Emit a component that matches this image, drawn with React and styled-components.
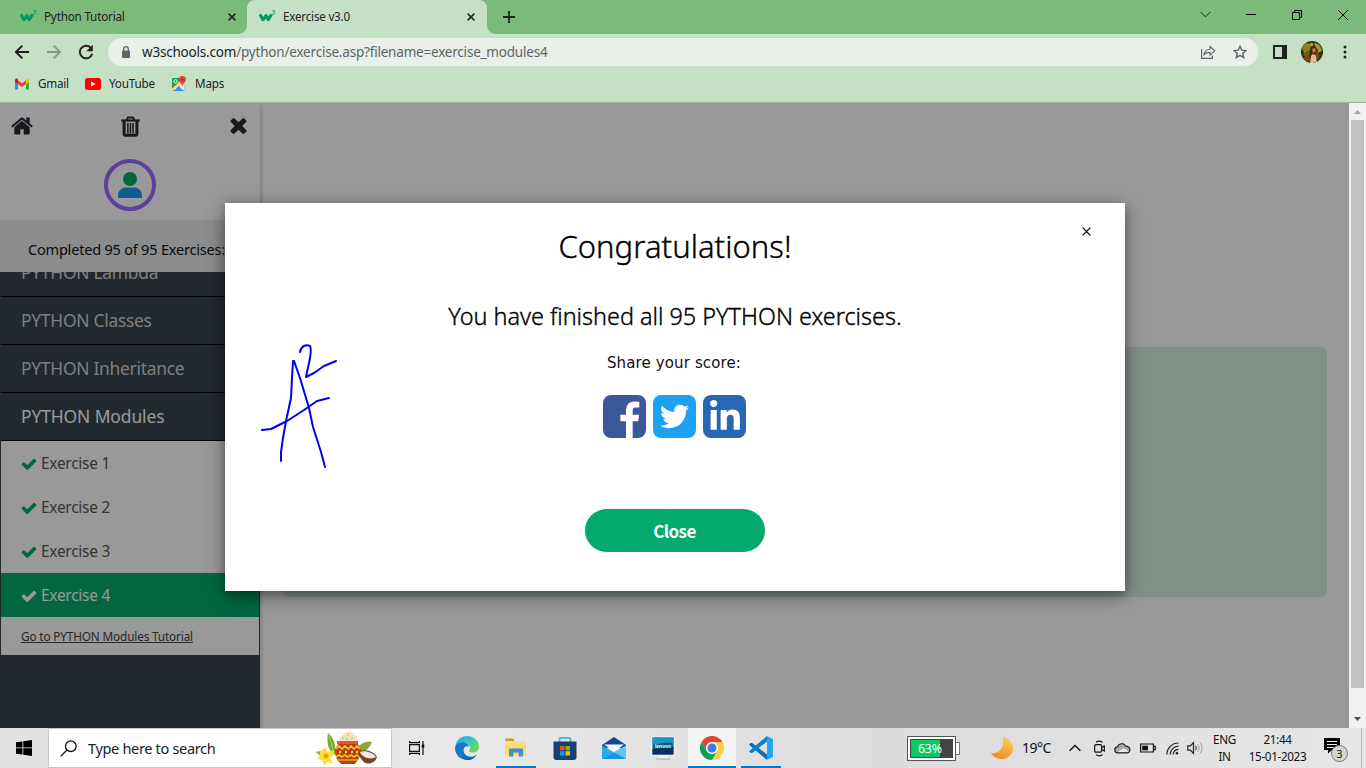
import React from "react";
import styled, { createGlobalStyle, css } from "styled-components";
import { FaTwitter, FaLinkedinIn } from "react-icons/fa";

const Global = createGlobalStyle`
  * { box-sizing: border-box; }
  html, body { margin: 0; padding: 0; overflow: hidden; }
  body { font-family: "Noto Sans", "Open Sans", sans-serif; }
  svg { display: block; flex: none; }
`;

const Screen = styled.div`
  position: relative;
  display: flex;
  flex-direction: column;
  width: 1366px;
  height: 768px;
  overflow: hidden;
`;

const Label = styled.span`
  display: block;
  white-space: nowrap;
  font-size: ${(p) => p.$size}px;
  font-weight: ${(p) => p.$weight || 400};
  letter-spacing: ${(p) => p.$track || 0}px;
  color: ${(p) => p.$color || "#202124"};
  line-height: ${(p) => p.$line || 20}px;
`;

/* ---------- browser frame ---------- */

const TabStrip = styled.div`
  display: flex;
  height: 34px;
  background: #7aba7b;
`;

const Tab = styled.div`
  display: flex;
  align-items: center;
  width: ${(p) => p.$width}px;
  height: 34px;
  padding: 0 ${(p) => p.$end}px 0 ${(p) => p.$pad}px;
  ${(p) =>
    p.$active &&
    css`
      background: #c5e1c5;
      border-radius: 8px 8px 0 0;
    `}
`;

const TabFlare = styled.div`
  width: 8px;
  height: 8px;
  align-self: flex-end;
  background: radial-gradient(
    circle at ${(p) => (p.$left ? "0 0" : "100% 0")},
    transparent 7.5px,
    #c5e1c5 8px
  );
`;

const TabTitle = styled(Label)`
  flex: 1;
  margin-left: 7px;
  padding-bottom: 2px;
`;

const NewTab = styled.div`
  display: flex;
  align-items: center;
  margin-left: 8px;
`;

const WindowButtons = styled.div`
  display: flex;
  margin-left: auto;
  height: 29px;
`;

const WindowButton = styled.div`
  display: flex;
  align-items: center;
  justify-content: center;
  width: 46px;
`;

const Toolbar = styled.div`
  display: flex;
  align-items: center;
  height: 36px;
  padding: 0 14px;
  background: #c5e1c5;
`;

const NavIcons = styled.div`
  display: flex;
  gap: 16px;
  width: 94px;
`;

const AddressBar = styled.div`
  display: flex;
  align-items: center;
  width: 1150px;
  height: 28px;
  padding: 0 11px 0 13px;
  border-radius: 14px;
  background: #e8f0e9;
`;

const Url = styled(Label)`
  flex: 1;
  margin-left: 11px;
  & > span { color: #5f6368; }
`;

const AddressActions = styled.div`
  display: flex;
  gap: 17px;
`;

const ToolbarActions = styled.div`
  display: flex;
  align-items: center;
  margin-left: 15px;
`;

const Avatar = styled.div`
  width: 22px;
  height: 22px;
  margin: 0 20px 0 14px;
  border-radius: 50%;
  overflow: hidden;
`;

const Bookmarks = styled.div`
  display: flex;
  height: 33px;
  padding: 4px 14px 0;
  background: #c5e1c5;
  border-bottom: 1px solid #9fb8a0;
`;

const Bookmark = styled.div`
  display: flex;
  align-items: center;
  height: 20px;
  gap: 8px;
  width: ${(p) => p.$width}px;
  & > span { padding-bottom: 2px; }
`;

/* ---------- page ---------- */

const Viewport = styled.div`
  display: flex;
  height: 625px;
`;

const Page = styled.div`
  position: relative;
  display: flex;
  width: 1349px;
  height: 625px;
  overflow: hidden;
  background: #fff;
`;

const Sidebar = styled.aside`
  display: flex;
  flex-direction: column;
  width: 260px;
  background: #38444d;
  box-shadow: 0 2px 5px rgba(0, 0, 0, 0.3);
`;

const SideTools = styled.div`
  display: flex;
  align-items: center;
  height: 47px;
  padding: 0 13px 1px 11px;
  background: #fff;
`;

const SideTool = styled.div`
  display: flex;
  flex: ${(p) => p.$flex};
`;

const Profile = styled.div`
  display: flex;
  justify-content: center;
  height: 70px;
  padding-top: 9px;
  background: #fff;
`;

const ProfileRing = styled.div`
  display: flex;
  align-items: center;
  justify-content: center;
  width: 52px;
  height: 52px;
  border: 4px solid #9d69ff;
  border-radius: 50%;
`;

const Progress = styled.div`
  height: 52px;
  padding: 19px 0 0 28px;
  background: #e7e9eb;
  overflow: hidden;
`;

const ChapterList = styled.div`
  height: 456px;
  padding: 0 1px;
  overflow: hidden;
`;

const Chapter = styled.div`
  display: flex;
  align-items: center;
  height: 48px;
  padding: 0 0 1px 20px;
  border-bottom: 1px solid #000;
  &:first-child { margin-top: -23px; }
`;

const Exercise = styled.div`
  display: flex;
  align-items: center;
  gap: 4px;
  height: 44px;
  padding: 1px 0 0 20px;
  background: ${(p) => (p.$active ? "#04aa6d" : "#fff")};
`;

const TutorialLink = styled.div`
  height: 38px;
  padding: 9px 0 0 20px;
  background: #fff;
  & > span { text-decoration: underline; }
`;

const Content = styled.main`
  width: 1089px;
  padding: 244px 22px 0 23px;
`;

const QuestionPanel = styled.div`
  height: 250px;
  border-radius: 5px;
  background: #d9eee1;
`;

const Backdrop = styled.div`
  position: absolute;
  inset: 0;
  padding: 100px 0 0 225px;
  background: rgba(0, 0, 0, 0.4);
`;

const Dialog = styled.section`
  position: relative;
  display: flex;
  flex-direction: column;
  align-items: center;
  width: 900px;
  height: 388px;
  padding-top: 19px;
  background: #fff;
  box-shadow: 0 4px 10px rgba(0, 0, 0, 0.3), 0 4px 20px rgba(0, 0, 0, 0.3);
`;

const Dismiss = styled.div`
  position: absolute;
  top: 24px;
  right: 34px;
`;

const Headline = styled(Label)`
  -webkit-text-stroke: 0.35px #000;
`;

const Message = styled(Headline)`
  margin-top: 26px;
`;

const ShareTitle = styled(Label)`
  margin: 17px 2px 22px 0;
  font-family: "DejaVu Sans", Verdana, sans-serif;
`;

const ShareRow = styled.div`
  display: flex;
  gap: 7px;
  padding-right: 1px;
`;

const ShareButton = styled.div`
  display: flex;
  align-items: center;
  justify-content: center;
  width: 43px;
  height: 43px;
  border-radius: 8px;
  background: ${(p) => p.$color};
  color: #fff;
`;

const CloseButton = styled.button`
  width: 180px;
  height: 43px;
  margin-top: 71px;
  padding: 0 1px 1px 0;
  border: 0;
  border-radius: 22px;
  background: #04aa6d;
  color: #fff;
  font: 700 17px "Noto Sans CJK SC", "Noto Sans", sans-serif;
  letter-spacing: -0.55px;
`;

const Ink = styled.svg`
  position: absolute;
  left: 255px;
  top: 335px;
`;

const Scrollbar = styled.div`
  display: flex;
  flex-direction: column;
  align-items: center;
  width: 17px;
  background: #f1f1f1;
`;

const ScrollArrow = styled.div`
  display: flex;
  align-items: center;
  justify-content: center;
  height: 17px;
`;

const Thumb = styled.div`
  width: 13px;
  height: 568px;
  margin-bottom: 22px;
  background: #c1c1c1;
`;

/* ---------- taskbar ---------- */

const Taskbar = styled.div`
  display: flex;
  height: 40px;
  background: linear-gradient(90deg, #e2e2e2, #e8e8e8 35%, #dcdcdc 65%, #e6e6e6);
`;

const StartButton = styled.div`
  display: flex;
  align-items: center;
  justify-content: center;
  width: 48px;
`;

const SearchBox = styled.div`
  display: flex;
  align-items: center;
  width: 344px;
  height: 40px;
  padding: 0 13px 0 11px;
  background: #fff;
  border: 1px solid #c8c8c8;
`;

const SearchText = styled(Label)`
  flex: 1;
  margin-left: 11px;
`;

const AppRow = styled.div`
  display: flex;
  gap: 1px;
`;

const TaskViewButton = styled.div`
  display: flex;
  align-items: center;
  justify-content: center;
  width: 48px;
  margin-right: 3px;
`;

const AppCell = styled.div`
  display: flex;
  align-items: center;
  justify-content: center;
  width: 48px;
  height: 40px;
`;

const RunningApp = styled(AppCell)`
  background: linear-gradient(#0078d7, #0078d7) 4px 38px / 40px 2px no-repeat;
`;

const FocusedApp = styled(AppCell)`
  background: linear-gradient(#0078d7, #0078d7) 0 38px / 48px 2px no-repeat, #f4f4f4;
`;

const Tray = styled.div`
  display: flex;
  align-items: center;
  margin-left: auto;
`;

const TrayItem = styled.div`
  display: flex;
  align-items: center;
  justify-content: center;
  flex-direction: column;
  width: ${(p) => p.$width}px;
  height: 40px;
`;

const NoticeItem = styled(TrayItem)`
  padding-top: 4px;
`;

const ShowDesktop = styled.div`
  width: 5px;
  height: 40px;
  border-left: 1px solid #b4b4b4;
`;

const BatteryWidget = styled.div`
  display: flex;
  align-items: center;
  width: 53px;
  margin-right: 30px;
`;

const BatteryShell = styled.div`
  width: 49px;
  height: 25px;
  padding: 2px;
  border: 1px solid #555;
  background: #fff;
`;

const BatteryFill = styled.div`
  height: 19px;
  padding-left: 7px;
  border: 1px solid #444;
  background: linear-gradient(90deg, #0cc860 70%, #444 70%);
`;

const BatteryTip = styled.div`
  width: 4px;
  height: 13px;
  border: 1px solid #777;
  border-left: 0;
  background: #fff;
`;

/* ---------- drawings ---------- */

const SchoolLogo = () => (
  <svg width="17" height="16" viewBox="0 0 17 16">
    <path d="M.8 5.200l3.200 5.600L7 6.500l2.300 4.300L12.600 5.200" fill="none" stroke="#059862" strokeWidth="3" strokeLinejoin="round" />
    <path d="M13.400 1.600h2.300l-1.200 1.500c1.600 0 1.600 2.200 0 2.200-.6 0-1-.2-1.300-.6" fill="none" stroke="#059862" strokeWidth=".8" />
  </svg>
);

const Cross = ({ size = 8, width = 1.5, color = "#202124" }) => (
  <svg width={size} height={size} viewBox="0 0 8 8">
    <path d="M.6.6l6.8 6.8M7.4.6L.6 7.4" stroke={color} strokeWidth={width} />
  </svg>
);

const BackIcon = ({ color = "#202124", flip }) => (
  <svg width="16" height="16" viewBox="0 0 16 16" transform={flip ? "scale(-1 1)" : undefined}>
    <path d="M15 8H2M8.300 1.600L1.900 8l6.400 6.400" fill="none" stroke={color} strokeWidth="2" />
  </svg>
);

const ReloadIcon = () => (
  <svg width="16" height="16" viewBox="0 0 16 16">
    <path d="M13.200 4.200A6.300 6.300 0 1 0 14.200 9.800" fill="none" stroke="#202124" strokeWidth="2" />
    <path d="M14.800.8v6.400H8.400z" fill="#202124" />
  </svg>
);

const LockIcon = () => (
  <svg width="10" height="13" viewBox="0 0 10 13">
    <rect x="1" y="4.500" width="8" height="7.500" rx="1" fill="#5f6368" />
    <path d="M2.700 5V3a2.300 2.300 0 0 1 4.600 0v2" fill="none" stroke="#5f6368" strokeWidth="1.300" />
  </svg>
);

const ShareIcon = () => (
  <svg width="16" height="15" viewBox="0 0 16 15">
    <path d="M1.600 4v9.400h10.800v-3" fill="none" stroke="#5f6368" strokeWidth="1.200" />
    <path d="M4 9.600c.6-3.600 2.800-5.200 6-5.300V1.500l4.800 4.300-4.800 4.300V7.400C7.500 7.300 5.500 8 4 9.600z" fill="none" stroke="#5f6368" strokeWidth="1.100" />
  </svg>
);

const StarIcon = () => (
  <svg width="14" height="14" viewBox="0 0 14 14">
    <path d="M7 1.300l1.700 3.900 4.200.4-3.200 2.800 1 4.200L7 10.400l-3.700 2.200 1-4.200L1.100 5.600l4.200-.4z" fill="none" stroke="#5f6368" strokeWidth="1.400" />
  </svg>
);

const PanelIcon = () => (
  <svg width="14" height="14" viewBox="0 0 14 14">
    <path d="M0 0h14v14H0zM2 2v10h7V2z" fill="#202124" fillRule="evenodd" />
  </svg>
);

const AvatarArt = () => (
  <svg width="22" height="22" viewBox="0 0 22 22">
    <rect width="22" height="22" fill="#33330e" />
    <path d="M1 7c2-5 6-6 8-3s-1 8-5 10z" fill="#8b8419" />
    <path d="M13 2c5 0 7 4 8 8l-5 2z" fill="#a79b22" />
    <path d="M2 13l5-4 2 4-4 4z" fill="#6e5f16" />
    <circle cx="10.500" cy="3.500" r="1.800" fill="#c0a828" />
    <path d="M9 7l5-2 3 4-1 5-5-2z" fill="#5a2212" />
    <path d="M11 8l3-1 1 3-3 2z" fill="#c07a4e" />
    <path d="M10 15c1-2.500 4-2.500 5 0l1 7h-7z" fill="#dcb79c" />
    <path d="M15 10l3 4-1 5-2-4zM3 17l5-4 1 6-4 2z" fill="#8c3f1c" />
  </svg>
);

const MoreIcon = () => (
  <svg width="4" height="14" viewBox="0 0 4 14" fill="#202124">
    <circle cx="2" cy="2" r="1.500" />
    <circle cx="2" cy="7" r="1.500" />
    <circle cx="2" cy="12" r="1.500" />
  </svg>
);

const GmailIcon = () => (
  <svg width="16" height="16" viewBox="0 0 16 16">
    <path d="M1 4v9.500h3V7.200z" fill="#4285f4" />
    <path d="M15 4v9.500h-3V7.200z" fill="#34a853" />
    <path d="M4 4.200v4L8 11l4-2.800v-4L8 7.200z" fill="#ea4335" />
    <path d="M1 4.200C1 2.200 2.800 2 4 3v5.200L1 6z" fill="#c5221f" />
    <path d="M15 4.200C15 2.200 13.200 2 12 3v5.200L15 6z" fill="#fbbc04" />
  </svg>
);

const YoutubeIcon = () => (
  <svg width="16" height="12" viewBox="0 0 16 12">
    <rect width="16" height="12" rx="2.500" fill="#f00" />
    <path d="M6.200 3.500v5L10.500 6z" fill="#fff" />
  </svg>
);

const MapsIcon = () => (
  <svg width="16" height="16" viewBox="0 0 16 16">
    <rect x="1" y="2" width="12.500" height="13" rx="1" fill="#1e9e5a" />
    <path d="M1 14L12 4l1.500 2v8.500z" fill="#e8eaed" />
    <path d="M1 12.500L9 5l1.500 1.500L2 15H1z" fill="#fdd663" />
    <path d="M3 15l4.500-5 5 5z" fill="#4285f4" />
    <circle cx="4.500" cy="5.300" r="1.600" fill="none" stroke="#fff" strokeWidth="1" />
    <path d="M11.400 0a3.600 3.600 0 0 1 3.600 3.600c0 2.400-2.600 3.400-3.600 6.600-1-3.200-3.600-4.200-3.600-6.600A3.600 3.600 0 0 1 11.400 0z" fill="#ea4335" />
    <circle cx="11.400" cy="3.600" r="1.200" fill="#a52714" />
  </svg>
);

const HomeIcon = () => (
  <svg width="22" height="18" viewBox="70 250 1652 1300" fill="#282a35">
    <path d="M1472 992v480q0 26-19 45t-45 19h-384v-384h-256v384h-384q-26 0-45-19t-19-45v-480q0-1 .5-3t.5-3l575-474 575 474q1 2 1 6zm223-69l-62 74q-8 9-21 11h-3q-13 0-21-7l-692-577-692 577q-12 8-24 7-13-2-21-11l-62-74q-8-10-7-23.500t11-21.500l719-599q32-26 76-26t76 26l244 204v-195q0-14 9-23t23-9h192q14 0 23 9t9 23v408l219 182q10 8 11 21.500t-7 23.500z" />
  </svg>
);

const TrashIcon = () => (
  <svg width="19" height="21" viewBox="0 0 19 21" fill="none" stroke="#282a35">
    <path d="M.3 4.500h18.400" strokeWidth="2.200" />
    <path d="M5.600 4l1.400-2.500h5L13.400 4" strokeWidth="1.900" />
    <path d="M3.100 5v12.800q0 1.500 1.300 1.500h10.200q1.300 0 1.300-1.500V5" strokeWidth="3" />
    <path d="M6.900 7v10.500M9.500 7v10.500M12.100 7v10.500" strokeWidth="1.500" />
  </svg>
);

const TimesIcon = () => (
  <svg width="17" height="16" viewBox="302 366 1188 1188" fill="#282a35">
    <path d="M1490 1322q0 40-28 68l-136 136q-28 28-68 28t-68-28l-294-294-294 294q-28 28-68 28t-68-28l-136-136q-28-28-28-68t28-68l294-294-294-294q-28-28-28-68t28-68l136-136q28-28 68-28t68 28l294 294 294-294q28-28 68-28t68 28l136 136q28 28 28 68t-28 68l-294 294 294 294q28 28 28 68z" />
  </svg>
);

const CheckIcon = ({ color }) => (
  <svg width="16" height="16" viewBox="50 34 1692 1692" fill={color}>
    <path d="M1671 566q0 40-28 68l-724 724-136 136q-28 28-68 28t-68-28l-136-136-362-362q-28-28-28-68t28-68l136-136q28-28 68-28t68 28l294 295 656-657q28-28 68-28t68 28l136 136q28 28 28 68z" />
  </svg>
);

const PersonIcon = () => (
  <svg width="24" height="26" viewBox="0 0 24 26">
    <circle cx="12" cy="7" r="7" fill="#04aa6d" />
    <path d="M0 26v-2c0-6 4-8.500 8-8.500h8c4 0 8 2.500 8 8.500v2z" fill="#1f98f4" />
  </svg>
);

const FacebookIcon = () => (
  <svg width="43" height="43" viewBox="128 128 1536 1536" fill="#3b5998">
    <path fill="#fff" d="M700 300h800v1360H700z" />
    <path d="M1376 128q119 0 203.500 84.500t84.500 203.500v960q0 119-84.500 203.500t-203.500 84.500h-188v-595h199l30-232h-229v-148q0-56 23.500-84t91.500-28l122-1v-207q-63-9-178-9-136 0-217.500 80t-81.500 226v171h-200v232h200v595h-532q-119 0-203.500-84.500t-84.500-203.500v-960q0-119 84.500-203.500t203.500-84.500h960z" />
  </svg>
);

const StartIcon = () => (
  <svg width="16" height="16" viewBox="0 0 16 16">
    <path d="M0 2.300l6.500-.9v6.100H0zM7.300 1.300L16 0v7.500H7.300zM0 8.300h6.500v6.300L0 13.700zM7.300 8.300H16V16l-8.700-1.200z" />
  </svg>
);

const SearchIcon = () => (
  <svg width="17" height="17" viewBox="0 0 17 17" fill="none" stroke="#111" strokeWidth="1.300">
    <circle cx="10.800" cy="6.200" r="5.300" />
    <path d="M7 10L.6 16.400" />
  </svg>
);

const FestivalArt = () => (
  <svg width="63" height="35" viewBox="0 0 63 35">
    <path d="M13 2c7 6 8 14 7 22-6-3-9-12-7-22z" fill="#7cab2c" />
    <path d="M14 4l5 19" stroke="#b5d468" />
    <path d="M42 18c3-6 9-8 15-7-3 7-8 12-15 11z" fill="#83ad33" />
    <path d="M0 21c6-2 12 0 15 6l-7 2c-2-4-4-6-8-8z" fill="#87b73b" />
    <path d="M20 20c0-4 4-6 4-10h18c0 4 4 6 4 10 0 6-4 10-6 13H26c-3-3-6-7-6-13z" fill="#b2420e" />
    <path d="M22 10h21v3H22z" fill="#e1562a" />
    <path d="M24 10c-1-4 3-5 4-6 2-4 9-4 10-1 4 1 5 4 4 7z" fill="#f2e3b8" />
    <g fill="#d4bc84"><circle cx="28" cy="7" r="1" /><circle cx="33" cy="4" r="1" /><circle cx="37" cy="7" r="1" /><circle cx="32" cy="8" r="1" /></g>
    <path d="M21 18l3-3 3 3 3-3 3 3 3-3 3 3 3-3 3 3M21 26l3-2 3 2 3-2 3 2 3-2 3 2 3-2 2 2" fill="none" stroke="#ffbf2e" strokeWidth="1.600" />
    <path d="M22 29h21" stroke="#f5a21b" strokeWidth="1.500" />
    <g fill="#ffd95a"><circle cx="25" cy="21" r="1.200" /><circle cx="31" cy="21" r="1.200" /><circle cx="37" cy="21" r="1.200" /><circle cx="42" cy="21" r="1.200" /></g>
    <path d="M5 20l5-3 3 4 5-2 1 5-4 3 3 5-6-1-3 3-2-5-5-1 3-4z" fill="#ffdf3f" />
    <circle cx="11" cy="25" r="2.500" fill="#f0a019" />
    <path d="M44 21c7-4 15 0 18 5-2 7-11 9-15 3-2-2-3-5-3-8z" fill="#7b432a" />
    <path d="M45 21c6-2 13 1 16 5-5 3-14 1-16-5z" fill="#f4ece2" />
  </svg>
);

const TaskViewIcon = () => (
  <svg width="17" height="16" viewBox="0 0 17 16" fill="none" stroke="#111" strokeWidth="1.200">
    <path d="M1.600 4.600h9.800v6.800H1.600zM1.600 1v1.600h9.800V1M1.600 15v-1.600h9.800V15M15 1v14" />
    <path d="M13.700 4.500h2.600v3h-2.600z" fill="#111" stroke="none" />
  </svg>
);

const EdgeIcon = () => (
  <svg width="24" height="24" viewBox="0 0 24 24">
    <defs>
      <linearGradient id="edgeTop" x1="0" x2="1" y1="0" y2=".6">
        <stop offset="0" stopColor="#2aa9e8" />
        <stop offset=".6" stopColor="#35c7bd" />
        <stop offset="1" stopColor="#6ddc54" />
      </linearGradient>
      <linearGradient id="edgeLow" x1="0" x2="1" y1="0" y2="1">
        <stop offset="0" stopColor="#1a8fe0" />
        <stop offset="1" stopColor="#0b4fa0" />
      </linearGradient>
    </defs>
    <path d="M.3 10C1.500 3.500 6.300 0 12 0c7.500 0 12 5.500 12 10.500 0 4-3 6-6 6-2.500 0-4.500-1-3.500-2.600 1.700-2.700-.3-5.900-4-6.400C6 7 1.500 8 .3 10z" fill="url(#edgeTop)" />
    <path d="M0 12c0-3.500 3.500-5.500 7.500-5.500 3 0 6 1.500 6.500 4.500-2-1.500-5-.5-5.500 2-.8 4.500 3.500 8 7.500 7.700 2.500-.1 4.500-1.200 6-2.200C20 22 16.500 24 12.200 24 5.500 24 0 19 0 12z" fill="#1677cf" />
    <path d="M8.600 13c-1.200 5.500 4 9 8.300 8.700 2 0 4-1 5.100-2.700C19.500 22.500 16.500 24 12.500 24 5 23.500 3.500 14 10 10.500c-.7.7-1.200 1.500-1.400 2.500z" fill="url(#edgeLow)" />
  </svg>
);

const ExplorerIcon = () => (
  <svg width="22" height="20" viewBox="0 0 22 20">
    <path d="M0 1.500Q0 .5 1 .5h7L10 3H0z" fill="#d99a0b" />
    <path d="M0 3h21v14.500H0z" fill="#ffd866" />
    <path d="M0 3h21v4H0z" fill="#ffe08a" />
    <path d="M4 18.500v-7q0-1 1-1h12q1 0 1 1v7h-4.300v-4H8.300v4z" fill="#3d8fd6" />
  </svg>
);

const StoreIcon = () => (
  <svg width="24" height="24" viewBox="0 0 24 24">
    <path d="M6.500 6V3.500q0-1.700 1.700-1.700h7.600q1.700 0 1.700 1.700V6" fill="none" stroke="#35b4ee" strokeWidth="1.800" />
    <path d="M.5 5.500h23v15.500q0 3-3 3h-17q-3 0-3-3z" fill="#173f73" />
    <path d="M7 10h4.500v4.300H7z" fill="#f25022" />
    <path d="M12.500 10H17v4.300h-4.500z" fill="#7fba00" />
    <path d="M7 15.200h4.500v4.300H7z" fill="#00a4ef" />
    <path d="M12.500 15.200H17v4.300h-4.500z" fill="#ffb900" />
  </svg>
);

const MailIcon = () => (
  <svg width="24" height="24" viewBox="0 0 24 24">
    <path d="M0 9L12 1l12 8v3H0z" fill="#0c4b96" />
    <path d="M2 8.500h20L12 16z" fill="#f4f8fc" />
    <path d="M0 9.500l12 7 12-7V23H0z" fill="#29a9ea" />
    <path d="M24 9.500L7 19l17 4z" fill="#5cc9f5" />
    <path d="M0 23l12-6.500L24 23z" fill="#1c93dc" />
  </svg>
);

const MonitorIcon = () => (
  <svg width="24" height="24" viewBox="0 0 24 24">
    <rect x=".5" y=".5" width="23" height="19" fill="#f5f7f9" />
    <rect x="1.500" y="1.500" width="21" height="17" fill="#0c5a86" />
    <path d="M1.500 1.500h21v6c-8-2-14 1-21 1z" fill="#1498bd" />
    <path d="M1.500 13l21-2v7.500h-21z" fill="#0b2f5c" />
    <text x="12" y="11.500" textAnchor="middle" fontSize="5" fontWeight="700" fontFamily="Liberation Sans, sans-serif" fill="#fff">lenovo</text>
    <path d="M7 20.500h10v1H7z" fill="#fff" />
    <path d="M4.500 22.500h15v1.200h-15z" fill="#bbb" />
  </svg>
);

const ChromeIcon = () => (
  <svg width="24" height="24" viewBox="0 0 24 24">
    <circle cx="12" cy="12" r="12" fill="#fff" />
    <path d="M1.600 6A12 12 0 0 1 22.400 6H12a6 6 0 0 0-5.200 9z" fill="#db4437" />
    <path d="M22.400 6A12 12 0 0 1 12 24l5.200-9A6 6 0 0 0 12 6z" fill="#ffcd40" />
    <path d="M1.600 6A12 12 0 0 0 12 24l5.200-9a6 6 0 0 1-10.400 0z" fill="#0f9d58" />
    <circle cx="12" cy="12" r="5.600" fill="#f1f1f1" />
    <circle cx="12" cy="12" r="4.500" fill="#3b7ded" />
  </svg>
);

const CodeIcon = () => (
  <svg width="24" height="24" viewBox="0 0 24 24">
    <path d="M0 8.400l1.700-1.500 1.600.1L18 18.500V24L1.200 9.800z" fill="#0a6fb8" />
    <path d="M0 15.600l1.700 1.500 1.600-.1L18 5.500V0L1.200 14.200z" fill="#0f80cc" />
    <path d="M17.500 0L24 3v18l-6.500 3c-.3 0 .5-1 .5-2V2c0-1-.8-2-.5-2z" fill="#25a5f2" />
  </svg>
);

const MoonIcon = () => (
  <svg width="22" height="22" viewBox="0 0 22 22">
    <defs>
      <linearGradient id="moon" x1=".8" x2=".3" y1="0" y2="1">
        <stop offset="0" stopColor="#f9cf55" />
        <stop offset="1" stopColor="#f08a24" />
      </linearGradient>
    </defs>
    <path d="M11.500 0c7 1 10.500 6 10.500 11A11 11 0 0 1 11 22C6 22 1.500 19.500 0 16c8 1.500 14.500-6 11.500-16z" fill="url(#moon)" />
  </svg>
);

const ChevronUp = () => (
  <svg width="12" height="8" viewBox="0 0 12 8">
    <path d="M.6 6.800L6 1.400l5.400 5.400" fill="none" stroke="#111" strokeWidth="1.400" />
  </svg>
);

const MeetIcon = () => (
  <svg width="13" height="17" viewBox="0 0 13 17" fill="none" stroke="#111" strokeWidth="1.200">
    <rect x="1.600" y="4.600" width="7" height="7.600" rx="1.500" />
    <path d="M8.600 7.500l2.700-1.500v5l-2.700-1.500M3 2.200C5 1 7.500 1 9.500 2.200M3 14.800c2 1.200 4.500 1.200 6.500 0" />
  </svg>
);

const CloudIcon = () => (
  <svg width="17" height="12" viewBox="0 0 17 12">
    <path d="M4 10.800a3 3 0 0 1-.4-6C4.500 1.500 9.800.2 11.600 4.200c3 0 4.400 2 4.300 3.800-.2 1.800-1.500 2.800-3 2.800z" fill="#aaa" stroke="#222" strokeWidth="1.200" />
    <path d="M3.500 10L10 6.300l5 3.700z" fill="#eee" />
  </svg>
);

const SmallBattery = () => (
  <svg width="16" height="10" viewBox="0 0 16 10">
    <path d="M.6 1h12.800v8H.6zM14 3.300h1.300v3.400H14" fill="none" stroke="#111" strokeWidth="1.200" />
    <path d="M2.200 2.700h5.800v4.600H2.200z" fill="#111" />
  </svg>
);

const WifiIcon = () => (
  <svg width="13" height="13" viewBox="0 0 13 13" fill="none" stroke="#222" strokeWidth="1.200">
    <path d="M.8 12.500C1 6 6 1 12.500 1M4 12.500C4.200 8 8 4.200 12.500 4.200M7.200 12.500c.2-3 2.300-5 5.300-5.200" />
    <circle cx="11" cy="11.200" r="1.300" fill="#222" stroke="none" />
  </svg>
);

const VolumeIcon = () => (
  <svg width="17" height="14" viewBox="0 0 17 14" fill="none">
    <path d="M.8 4.800h2.600L6.500 1.600v10.800L3.400 9.200H.8z" stroke="#222" strokeWidth="1.200" />
    <path d="M8.500 4.800c1 1.400 1 3 0 4.400" stroke="#222" />
    <path d="M10.700 3.300c1.800 2.300 1.800 5.100 0 7.400M13 1.600c2.700 3.300 2.700 7.500 0 10.800" stroke="#999" />
  </svg>
);

const NoticeIcon = () => (
  <svg width="24" height="24" viewBox="0 0 24 24">
    <path d="M0 0h16v12H8l-4 3.500V12H0z" fill="#000" />
    <path d="M3 3.500h10M3 6.500h10M3 9.500h7" stroke="#eee" strokeWidth="1.200" />
    <circle cx="15.500" cy="15.500" r="8" fill="#d5d5d5" stroke="#777" />
    <text x="15.500" y="19.500" textAnchor="middle" fontSize="11" fontFamily="Noto Sans, sans-serif" fill="#111">3</text>
  </svg>
);

const chapters = [
  ["PYTHON Lambda", false],
  ["PYTHON Classes", false],
  ["PYTHON Inheritance", false],
  ["PYTHON Modules", true],
];

export default function App() {
  return (
    <Screen>
      <Global />
      <TabStrip>
        <Tab $width={239} $pad={20} $end={3}>
          <SchoolLogo />
          <TabTitle $size={11.7} $track={-0.2}>Python Tutorial</TabTitle>
          <Cross />
        </Tab>
        <TabFlare $left />
        <Tab $active $width={240} $pad={12} $end={12}>
          <SchoolLogo />
          <TabTitle $size={11.7} $track={-0.23}>Exercise v3.0</TabTitle>
          <Cross />
        </Tab>
        <TabFlare />
        <NewTab>
          <svg width="12" height="12" viewBox="0 0 12 12"><path d="M0 6h12M6 0v12" stroke="#202124" strokeWidth="1.800" /></svg>
        </NewTab>
        <WindowButtons>
          <WindowButton><svg width="11" height="7" viewBox="0 0 11 7"><path d="M.5.8l5 5 5-5" fill="none" stroke="#202124" /></svg></WindowButton>
          <WindowButton><svg width="10" height="1"><path d="M0 .5h10" stroke="#000" /></svg></WindowButton>
          <WindowButton><svg width="10" height="10" viewBox="0 0 10 10"><path d="M.5 2.500h7v7h-7zM2.500 2.500v-2h7v7h-2" fill="none" stroke="#000" /></svg></WindowButton>
          <WindowButton><svg width="10" height="10" viewBox="0 0 10 10"><path d="M0 0l10 10M10 0L0 10" stroke="#111" /></svg></WindowButton>
        </WindowButtons>
      </TabStrip>

      <Toolbar>
        <NavIcons>
          <BackIcon />
          <BackIcon flip color="#849a86" />
          <ReloadIcon />
        </NavIcons>
        <AddressBar>
          <LockIcon />
          <Url $size={13.5} $track={-0.2}>w3schools.com<span>/python/exercise.asp?filename=exercise_modules4</span></Url>
          <AddressActions>
            <ShareIcon />
            <StarIcon />
          </AddressActions>
        </AddressBar>
        <ToolbarActions>
          <PanelIcon />
          <Avatar><AvatarArt /></Avatar>
          <MoreIcon />
        </ToolbarActions>
      </Toolbar>

      <Bookmarks>
        <Bookmark $width={71}><GmailIcon /><Label $size={11.7} $track={-0.25}>Gmail</Label></Bookmark>
        <Bookmark $width={86}><YoutubeIcon /><Label $size={11.7} $track={-0.2}>YouTube</Label></Bookmark>
        <Bookmark $width={70}><MapsIcon /><Label $size={11.7} $track={-0.2}>Maps</Label></Bookmark>
      </Bookmarks>

      <Viewport>
        <Page>
          <Sidebar>
            <SideTools>
              <SideTool $flex="0 0 110px"><HomeIcon /></SideTool>
              <SideTool $flex="1"><TrashIcon /></SideTool>
              <SideTool><TimesIcon /></SideTool>
            </SideTools>
            <Profile><ProfileRing><PersonIcon /></ProfileRing></Profile>
            <Progress><Label $size={14.5} $track={-0.2} $color="#111">Completed 95 of 95 Exercises:</Label></Progress>
            <ChapterList>
              {chapters.map(([name, open]) => (
                <Chapter key={name}>
                  <Label $size={17.4} $track={open ? -0.08 : -0.26} $color={open ? "#fff" : "#d2d2d2"}>{name}</Label>
                </Chapter>
              ))}
              {[1, 2, 3, 4].map((n) => (
                <Exercise key={n} $active={n === 4}>
                  <CheckIcon color={n === 4 ? "#fff" : "#04aa6d"} />
                  <Label $size={15.4} $track={-0.24} $color={n === 4 ? "#fff" : "#555"}>Exercise {n}</Label>
                </Exercise>
              ))}
              <TutorialLink><Label $size={11.8} $track={-0.16} $color="#444">Go to PYTHON Modules Tutorial</Label></TutorialLink>
            </ChapterList>
          </Sidebar>
          <Content><QuestionPanel /></Content>
          <Backdrop>
            <Dialog>
              <Dismiss><Cross size={9} width={1.1} color="#000" /></Dismiss>
              <Headline $size={31} $weight={300} $track={0.05} $color="#000" $line={48}>Congratulations!</Headline>
              <Message $size={23.4} $weight={300} $color="#000" $line={40}>You have finished all 95 PYTHON exercises.</Message>
              <ShareTitle $size={15} $track={0.13} $color="#111">Share your score:</ShareTitle>
              <ShareRow>
                <FacebookIcon />
                <ShareButton $color="#1da1f2"><FaTwitter size={29} /></ShareButton>
                <ShareButton $color="#2867b2"><FaLinkedinIn size={34} /></ShareButton>
              </ShareRow>
              <CloseButton>Close</CloseButton>
            </Dialog>
          </Backdrop>
        </Page>
        <Scrollbar>
          <ScrollArrow><svg width="7" height="4"><path d="M0 4l3.500-4L7 4z" fill="#a3a3a3" /></svg></ScrollArrow>
          <Thumb />
          <ScrollArrow><svg width="7" height="4"><path d="M0 0l3.500 4L7 0z" fill="#505050" /></svg></ScrollArrow>
        </Scrollbar>
      </Viewport>

      <Taskbar>
        <StartButton><StartIcon /></StartButton>
        <SearchBox>
          <SearchIcon />
          <SearchText $size={14.5} $track={-0.32}>Type here to search</SearchText>
          <FestivalArt />
        </SearchBox>
        <TaskViewButton><TaskViewIcon /></TaskViewButton>
        <AppRow>
          <AppCell><EdgeIcon /></AppCell>
          <RunningApp><ExplorerIcon /></RunningApp>
          <AppCell><StoreIcon /></AppCell>
          <AppCell><MailIcon /></AppCell>
          <AppCell><MonitorIcon /></AppCell>
          <FocusedApp><ChromeIcon /></FocusedApp>
          <RunningApp><CodeIcon /></RunningApp>
        </AppRow>
        <Tray>
          <BatteryWidget>
            <BatteryShell><BatteryFill><Label $size={12.5} $track={-0.3} $line={17} $color="#fff">63%</Label></BatteryFill></BatteryShell>
            <BatteryTip />
          </BatteryWidget>
          <TrayItem $width={24}><MoonIcon /></TrayItem>
          <TrayItem $width={45}><Label $size={14} $track={-0.5} $color="#111">19°C</Label></TrayItem>
          <TrayItem $width={31}><ChevronUp /></TrayItem>
          <TrayItem $width={19}><MeetIcon /></TrayItem>
          <TrayItem $width={27}><CloudIcon /></TrayItem>
          <TrayItem $width={23}><SmallBattery /></TrayItem>
          <TrayItem $width={26}><WifiIcon /></TrayItem>
          <TrayItem $width={20}><VolumeIcon /></TrayItem>
          <TrayItem $width={39}>
            <Label $size={11.7} $track={-0.3} $line={17} $color="#111">ENG</Label>
            <Label $size={11.7} $track={-0.3} $line={17} $color="#111">IN</Label>
          </TrayItem>
          <TrayItem $width={67}>
            <Label $size={11.7} $track={-0.35} $line={17} $color="#111">21:44</Label>
            <Label $size={11.7} $track={-0.35} $line={17} $color="#111">15-01-2023</Label>
          </TrayItem>
          <NoticeItem $width={50}><NoticeIcon /></NoticeItem>
          <ShowDesktop />
        </Tray>
      </Taskbar>

      <Ink width="90" height="140" viewBox="255 335 90 140" fill="none" stroke="#0000f5" strokeWidth="2" strokeLinecap="round" strokeLinejoin="round">
        <path d="M293 361L292 378 291 398 286 421 283 438 281 452 281 461" />
        <path d="M294 361L300 378 309 408 313 427 321 452 325 467" />
        <path d="M262 430L271 429 287 421 304 410 317 401 329 398" />
        <path d="M300 352C301 346 306 344 310 346 313 351 308 366 306 377L314 373 324 366 336 361" />
      </Ink>
    </Screen>
  );
}
